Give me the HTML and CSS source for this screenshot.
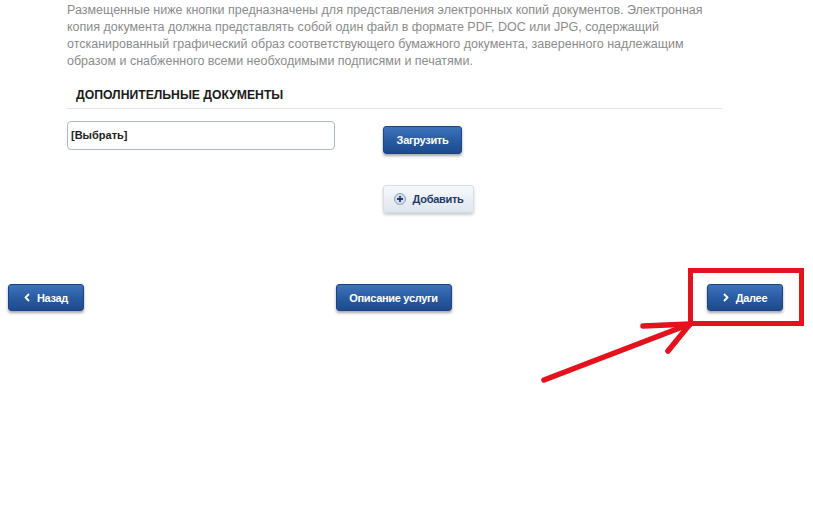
FILE: index.html
```html
<!DOCTYPE html>
<html lang="ru">
<head>
    <meta charset="UTF-8">
    <meta name="viewport" content="width=device-width, initial-scale=1.0">
    <title>Дополнительные документы</title>
    <link rel="stylesheet" href="styles.css">
</head>
<body>
<div class="page">

    <div class="content">
        <p class="intro">
            Размещенные ниже кнопки предназначены для представления электронных копий документов. Электронная<br>
            копия документа должна представлять собой один файл в формате PDF, DOC или JPG, содержащий<br>
            отсканированный графический образ соответствующего бумажного документа, заверенного надлежащим<br>
            образом и снабженного всеми необходимыми подписями и печатями.
        </p>

        <h2 class="section-title">ДОПОЛНИТЕЛЬНЫЕ ДОКУМЕНТЫ</h2>

        <div class="upload-row">
            <div class="file-field">[Выбрать]</div>
            <div class="upload-actions">
                <button type="button" class="btn btn-primary btn-upload">Загрузить</button>
                <button type="button" class="btn btn-light">
                    <svg class="plus-icon" width="12" height="12" viewBox="0 0 12 12">
                        <circle cx="6" cy="6" r="5.5" fill="#d3dce8" stroke="#8ea2bd" stroke-width="1"/>
                        <path d="M6 3v6M3 6h6" stroke="#1f3f73" stroke-width="1.8"/>
                    </svg>
                    Добавить
                </button>
            </div>
        </div>
    </div>

    <div class="nav-row">
        <button type="button" class="btn btn-primary btn-nav">
            <svg class="chevron" width="6" height="9" viewBox="0 0 6 9">
                <polyline points="5,1 1.5,4.5 5,8" fill="none" stroke="#fff" stroke-width="1.8"/>
            </svg>
            Назад
        </button>
        <button type="button" class="btn btn-primary btn-nav btn-info">Описание услуги</button>
        <button type="button" class="btn btn-primary btn-nav">
            <svg class="chevron" width="6" height="9" viewBox="0 0 6 9">
                <polyline points="1,1 4.5,4.5 1,8" fill="none" stroke="#fff" stroke-width="1.8"/>
            </svg>
            Далее
        </button>
    </div>

    <!-- red marker drawn over the screenshot -->
    <svg class="annotation" width="813" height="532" viewBox="0 0 813 532">
        <rect x="690.5" y="270.5" width="111" height="53" fill="none" stroke="#e3121c" stroke-width="5"/>
        <g stroke="#e3121c" stroke-width="5.5" stroke-linecap="round" fill="none">
            <line x1="544" y1="380" x2="690" y2="324"/>
            <line x1="643" y1="326" x2="690" y2="324"/>
            <line x1="668" y1="351" x2="690" y2="324"/>
        </g>
    </svg>

</div>
</body>
</html>
```

FILE: styles.css
```css
body{
    margin: 0;
    font-family: "Liberation Sans", Arial, sans-serif;
    background: #fff;
}
.page{
    position: relative;
    width: 813px;
    height: 532px;
    overflow: hidden;
}
.content{
    width: 655px;
    padding-left: 67px;
}
.intro{
    margin: 2px 0 0;
    font-size: 12.5px;
    line-height: 17px;
    color: #8b8b8b;
    white-space: nowrap;
}
.section-title{
    margin: 17px 0 0;
    padding: 0 0 4px 9px;
    font-size: 12.2px;
    line-height: 17px;
    color: #1b1b1b;
    border-bottom: 1px solid #e3e3e3;
}
.upload-row{
    display: flex;
    gap: 48px;
    margin-top: 12px;
}
.file-field{
    box-sizing: border-box;
    width: 268px;
    height: 29px;
    padding: 6px 3px;
    border: 1px solid #a9bac4;
    border-radius: 4px;
    font-size: 11px;
    font-weight: bold;
    color: #222;
    line-height: 15px;
}
.upload-actions{
    display: flex;
    flex-direction: column;
    align-items: flex-start;
    gap: 31px;
    padding-top: 5px;
}
.btn{
    display: flex;
    align-items: center;
    justify-content: center;
    gap: 8px;
    height: 28px;
    padding: 0 10px;
    border-radius: 3px;
    font-family: "Liberation Sans", Arial, sans-serif;
    font-size: 11px;
    font-weight: bold;
    letter-spacing: -0.3px;
    cursor: pointer;
}
.btn svg{
    flex-shrink: 0;
}
.btn-primary{
    color: #fff;
    border: 1px solid #1c427f;
    background: linear-gradient(#3d73bb, #2a5ca3 50%, #1d4a8c);
    box-shadow: 0 2px 3px rgba(0,0,0,0.35);
}
.btn-upload{
    width: 79px;
}
.btn-light{
    width: 91px;
    gap: 7px;
    color: #1d3a68;
    border: 1px solid #d5dde7;
    background: linear-gradient(#f7f9fc, #dfe6ef);
    box-shadow: 0 2px 3px rgba(0,0,0,0.2);
}
.nav-row{
    display: flex;
    justify-content: space-between;
    align-items: center;
    margin-top: 71px;
    padding: 0 30px 0 8px;
}
.btn-nav{
    width: 76px;
    height: 27px;
    gap: 7px;
}
.btn-info{
    width: 116px;
    margin-right: 4px;
}
.annotation{
    position: absolute;
    left: 0;
    top: 0;
    pointer-events: none;
}
```
